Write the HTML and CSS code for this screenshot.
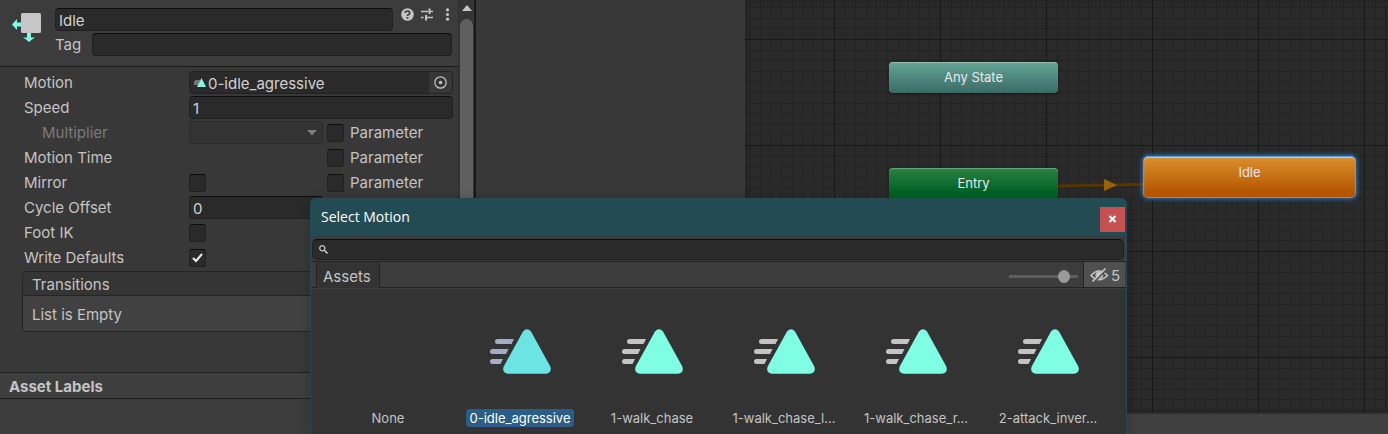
FILE: index.html
```html
<!DOCTYPE html>
<html lang="en">
<head>
<meta charset="utf-8">
<title>Animator - Select Motion</title>
<link rel="stylesheet" href="styles.css">
</head>
<body>
<svg class="defs" width="0" height="0" aria-hidden="true">
  <symbol id="clip" viewBox="0 0 61 45">
    <path class="clip-bars" d="M7.500 10H24L21.500 15H7.500A2.500 2.500 0 0 1 7.500 10ZM2.500 20H18.500L16 25H2.500A2.500 2.500 0 0 1 2.500 20ZM2.500 30H13L10.500 35H2.500A2.500 2.500 0 0 1 2.500 30Z"/>
    <path class="clip-body" d="M33 2.500Q37 -2 41 2.500L60.300 37.500Q62.300 44 56 44.700H18Q11.700 44 13.700 37.500Z"/>
  </symbol>
</svg>
<main class="app">
  <section class="inspector" aria-label="Inspector">
    <div class="panel">
      <header class="state-head">
        <svg class="state-icon" width="30" height="30" viewBox="0 0 30 30" aria-hidden="true">
          <path fill="#7ffbe2" d="M0 11.500L5 6V9.500H10V13.500H5V17ZM15 20H19V24.500H23Q20 26 17 29Q14 26 11 24.500H15Z"/>
          <rect x="9" y="0" width="20" height="20" rx="1.500" fill="#c6c6c6"/>
        </svg>
        <div class="head-fields">
          <div class="name-line">
            <input class="field" type="text" value="Idle" aria-label="State name">
            <div class="head-tools">
              <button class="tool" type="button" aria-label="Help"><svg width="13" height="13" viewBox="0 0 13 13"><circle cx="6.500" cy="6.500" r="6.300" fill="#c4c4c4"/><path d="M4.300 5Q4.300 3 6.500 3Q8.700 3 8.700 4.900Q8.700 6 7.500 6.500Q6.500 7 6.500 8" fill="none" stroke="#3c3c3c" stroke-width="1.700"/><rect x="5.600" y="9" width="1.800" height="1.700" fill="#3c3c3c"/></svg></button>
              <button class="tool" type="button" aria-label="Presets"><svg width="13" height="13" viewBox="0 0 13 13"><path d="M0 3.500H7M9 3.500H12M0 9.500H2.500M4.500 9.500H12" stroke="#c4c4c4" stroke-width="1.500"/><path d="M8.500 .5V6M5 7V12.500" stroke="#c4c4c4" stroke-width="2"/></svg></button>
              <button class="tool" type="button" aria-label="More"><svg width="13" height="13" viewBox="0 0 13 13" fill="#c4c4c4"><circle cx="6.500" cy="1.800" r="1.600"/><circle cx="6.500" cy="6.500" r="1.600"/><circle cx="6.500" cy="11.200" r="1.600"/></svg></button>
            </div>
          </div>
          <div class="tag-line"><label for="tag">Tag</label><input class="field" id="tag" type="text"></div>
        </div>
      </header>
      <div class="rows">
        <div class="row">
          <span class="label">Motion</span>
          <div class="object-field">
            <svg width="12" height="9" viewBox="0 0 12 9" aria-hidden="true"><path d="M1.500 2H6V7H0V3.500Z" fill="#747474"/><path d="M7.500 0L12 9H3Z" fill="#7ffbe2"/></svg>
            <span class="object-name">0-idle_agressive</span>
            <button class="picker" type="button" aria-label="Pick motion"><svg width="13" height="13" viewBox="0 0 13 13"><circle cx="6.500" cy="6.500" r="5.700" fill="none" stroke="#c4c4c4" stroke-width="1.200"/><circle cx="6.500" cy="6.500" r="1.700" fill="#c4c4c4"/></svg></button>
          </div>
        </div>
        <div class="row"><label class="label" for="speed">Speed</label><input class="field" id="speed" type="text" value="1"></div>
        <div class="row">
          <label class="label sub" for="mult">Multiplier</label>
          <div class="split">
            <div class="drop"><select id="mult" disabled><option></option></select><svg width="10" height="6" viewBox="0 0 10 6" aria-hidden="true"><path d="M0 0H10L5 5.500Z" fill="#7d7d7d"/></svg></div>
            <label class="param"><input class="check" type="checkbox">Parameter</label>
          </div>
        </div>
        <div class="row">
          <span class="label">Motion Time</span>
          <div class="split"><span></span><label class="param"><input class="check" type="checkbox">Parameter</label></div>
        </div>
        <div class="row">
          <label class="label" for="mirror">Mirror</label>
          <div class="split"><input class="check" id="mirror" type="checkbox"><label class="param"><input class="check" type="checkbox">Parameter</label></div>
        </div>
        <div class="row">
          <label class="label" for="offset">Cycle Offset</label>
          <div class="split"><input class="field" id="offset" type="text" value="0"></div>
        </div>
        <div class="row"><label class="label" for="ik">Foot IK</label><input class="check" id="ik" type="checkbox"></div>
        <div class="row"><label class="label" for="wd">Write Defaults</label><input class="check" id="wd" type="checkbox" checked></div>
      </div>
      <section class="list">
        <h2 class="list-head">Transitions</h2>
        <p class="list-body">List is Empty</p>
      </section>
      <h2 class="labels-head">Asset Labels</h2>
      <div class="labels-body"></div>
    </div>
    <div class="scrollbar" aria-hidden="true">
      <svg width="10" height="6" viewBox="0 0 10 6"><path d="M0 6L5 0L10 6Z" fill="#c4c4c4"/></svg>
      <div class="thumb"></div>
    </div>
  </section>

  <div class="gutter"></div>

  <section class="graph" aria-label="State machine">
    <div class="canvas">
      <svg class="grid" width="100%" height="100%" aria-hidden="true">
        <defs>
          <pattern id="cells" x="89" y="39" width="106" height="106" patternUnits="userSpaceOnUse">
            <path fill="none" stroke="#232323" d="M11.500 0V106M21.500 0V106M32.500 0V106M42.500 0V106M53.500 0V106M64.500 0V106M74.500 0V106M85.500 0V106M95.500 0V106M0 11.500H106M0 21.500H106M0 32.500H106M0 42.500H106M0 53.500H106M0 64.500H106M0 74.500H106M0 85.500H106M0 95.500H106"/>
            <path fill="none" stroke="#191919" d="M.5 0V106M0 .5H106"/>
          </pattern>
        </defs>
        <rect width="100%" height="100%" fill="url(#cells)"/>
        <path d="M313 186L399 184.500" stroke="#563600" stroke-width="3"/>
        <path d="M359 179L372 185L359 191Z" fill="#9c6300"/>
      </svg>
      <div class="node any">Any State</div>
      <div class="node entry">Entry</div>
      <div class="node idle">Idle</div>
    </div>
    <div class="graph-foot"></div>
  </section>

  <section class="dialog" role="dialog" aria-labelledby="dlg-title">
    <header class="dialog-head">
      <h1 id="dlg-title">Select Motion</h1>
      <button class="close" type="button" aria-label="Close"><svg width="9" height="8" viewBox="0 0 9 8"><path d="M1.500 1L7.500 7M7.500 1L1.500 7" stroke="#fff" stroke-width="2"/></svg></button>
    </header>
    <div class="search">
      <svg width="9" height="9" viewBox="0 0 9 9" aria-hidden="true"><circle cx="3.300" cy="3.300" r="2.600" fill="none" stroke="#c4c4c4" stroke-width="1.300"/><path d="M5.200 5.200L8.500 8.500" stroke="#c4c4c4" stroke-width="1.600"/></svg>
      <input type="text" aria-label="Search">
    </div>
    <div class="toolbar">
      <button class="tab" type="button">Assets</button>
      <input class="size" type="range" min="0" max="100" value="87" aria-label="Icon size">
      <button class="hidden-count" type="button"><svg width="19" height="15" viewBox="0 0 19 15" aria-hidden="true"><path d="M1 7.500Q9 -1.500 17.500 7.500Q9 16 1 7.500Z" fill="none" stroke="#c4c4c4" stroke-width="1.600"/><circle cx="9.300" cy="7.200" r="3.800" fill="#c4c4c4"/><path d="M3.500 14.500L16.500 1.500" stroke="#505050" stroke-width="2"/><path d="M2.500 13.500L15.500 .5" stroke="#c4c4c4" stroke-width="1.700"/></svg>5</button>
    </div>
    <div class="assets">
      <button class="asset" type="button"><span class="thumbnail"></span><span class="caption">None</span></button>
      <button class="asset selected" type="button"><svg class="thumbnail"><use href="#clip"/></svg><span class="caption">0-idle_agressive</span></button>
      <button class="asset" type="button"><svg class="thumbnail"><use href="#clip"/></svg><span class="caption">1-walk_chase</span></button>
      <button class="asset" type="button"><svg class="thumbnail"><use href="#clip"/></svg><span class="caption">1-walk_chase_l...</span></button>
      <button class="asset" type="button"><svg class="thumbnail"><use href="#clip"/></svg><span class="caption">1-walk_chase_r...</span></button>
      <button class="asset" type="button"><svg class="thumbnail"><use href="#clip"/></svg><span class="caption">2-attack_inver...</span></button>
    </div>
  </section>
</main>
</body>
</html>
```

FILE: styles.css
```css
* { box-sizing: border-box; }

body {
  margin: 0;
  background: #383838;
  color: #c4c4c4;
  font: 15px/23px Inter, sans-serif;
}

button, input, select { font: inherit; color: inherit; margin: 0; }
button { padding: 0; border: 0; background: none; }
h1, h2, p { margin: 0; font-size: inherit; font-weight: 400; }
.defs { position: absolute; }

.app {
  position: relative;
  display: grid;
  grid-template-columns: 476px 269px 1fr;
  height: 100vh;
  overflow: hidden;
}

/* Inspector */
.inspector { display: flex; border-right: 2px solid #191919; }
.panel { flex: 1; display: flex; flex-direction: column; }

.state-head {
  display: flex;
  gap: 13px;
  padding: 8px 6px 10px 12px;
  background: #3c3c3c;
  border-bottom: 1px solid #1a1a1a;
}
.state-icon { margin-top: 5px; }
.head-fields { flex: 1; display: flex; flex-direction: column; gap: 2px; }
.name-line, .tag-line { display: flex; }
.name-line { gap: 8px; margin-right: -2px; }
.tag-line { gap: 11px; }
.head-tools { display: flex; gap: 7px; align-items: flex-start; }
.tool { display: flex; width: 13px; height: 13px; }

.field {
  flex: 1;
  min-width: 0;
  width: 100%;
  height: 23px;
  padding: 2px 3px 0;
  color: #d2d2d2;
  background: #2a2a2a;
  border: 1px solid #212121;
  border-top-color: #0d0d0d;
  border-radius: 4px;
}

.rows { display: flex; flex-direction: column; gap: 2px; padding: 4px 5px 0 24px; }
.row { display: grid; grid-template-columns: 165px 1fr; align-items: center; height: 23px; }
.sub { padding-left: 18px; color: #7b7b7b; }
.split { display: grid; grid-template-columns: 134px 1fr; gap: 4px; align-items: center; }
.param { display: flex; align-items: center; gap: 6px; }

.check {
  appearance: none;
  width: 17px;
  height: 18px;
  background: #2a2a2a;
  border: 1px solid #212121;
  border-top-color: #0d0d0d;
  border-radius: 3px;
}
.check:checked {
  background: #2a2a2a url("data:image/svg+xml,%3Csvg xmlns='http://www.w3.org/2000/svg' viewBox='0 0 15 15'%3E%3Cpath d='M3 8L6 11L12 4' fill='none' stroke='%23eee' stroke-width='2'/%3E%3C/svg%3E") center / 15px no-repeat;
}

.object-field {
  display: flex;
  align-items: center;
  gap: 2px;
  height: 23px;
  padding-left: 4px;
  color: #d2d2d2;
  background: #2a2a2a;
  border: 1px solid #212121;
  border-radius: 4px;
  overflow: hidden;
}
.object-name { flex: 1; padding-top: 2px; }
.picker { display: flex; align-items: center; justify-content: center; width: 23px; height: 21px; background: #373737; }

.drop { display: flex; align-items: center; justify-content: flex-end; height: 23px; background: #333; border: 1px solid #2b2b2b; border-radius: 4px; padding-right: 5px; }
.drop select { flex: 1; min-width: 0; height: 20px; appearance: none; border: 0; background: none; }

.list { margin: 2px 6px 40px 22px; border: 1px solid #242424; border-radius: 4px; background: #414141; }
.list-head { height: 24px; padding: 2px 9px; line-height: 22px; background: #353535; border-bottom: 1px solid #242424; border-radius: 3px 3px 0 0; }
.list-body { padding: 7px 9px 5px; }
.labels-head { padding: 2px 9px 0; background: #3e3e3e; border: solid #1f1f1f; border-width: 1px 0; font-weight: 700; }
.labels-body { flex: 1; background: #3c3c3c; }

.scrollbar { display: flex; flex-direction: column; align-items: center; gap: 8px; width: 16px; padding-top: 5px; background: #353535; border-left: 1px solid #303030; }
.scrollbar svg { flex: none; }
.thumb { flex: 1; width: 13px; background: #5f5f5f; border-radius: 7px 7px 0 0; }

/* State machine graph */
.graph { display: flex; flex-direction: column; }
.canvas { position: relative; flex: 1; background: #2a2a2a; overflow: hidden; box-shadow: inset 2px 0 4px #222; }
.grid { display: block; position: absolute; }
.graph-foot { height: 21px; background: #404040; border-top: 1px solid #333; }

.node {
  position: absolute;
  width: 169px;
  height: 31px;
  border-radius: 4px;
  color: #e8e8e8;
  font-size: 13px;
  line-height: 30px;
  text-align: center;
  box-shadow: inset 0 1px 1px #ffffff50, 0 1px 2px #0008;
}
.any { left: 144px; top: 62px; background: linear-gradient(#63a596, #3a6b66); }
.entry { left: 144px; top: 168px; background: linear-gradient(#2a8142, #016025 80%); }
.idle {
  left: 399px;
  top: 157px;
  width: 211px;
  height: 40px;
  background: linear-gradient(#d98f2c, #b45500 90%);
  box-shadow: inset 0 1px 1px #ffffff80, 0 0 0 1px #5b9bdc, 0 0 4px 2px #2878c8;
}

/* Motion picker */
.dialog {
  position: absolute;
  left: 310px;
  top: 198px;
  bottom: 0;
  width: 817px;
  display: flex;
  flex-direction: column;
  background: #3c3c3c;
  border: solid #234b53;
  border-width: 0 1px;
  border-radius: 6px 6px 0 0;
  overflow: hidden;
  box-shadow: 0 2px 12px #0003;
}
.dialog-head { display: flex; align-items: center; justify-content: space-between; height: 38px; padding: 0 1px 0 10px; background: #234b53; color: #fff; }
.dialog-head h1 { font: 14px/38px "Open Sans", sans-serif; }
.close { display: flex; align-items: center; justify-content: center; width: 25px; height: 25px; margin-top: 4px; background: #c75050; }

.search { display: flex; align-items: center; gap: 6px; height: 21px; margin: 3px 2px 1px 1px; padding: 0 6px; background: #2a2a2a; border: 1px solid #212121; border-top-color: #0d0d0d; border-radius: 5px; }
.search input { flex: 1; height: 17px; border: 0; background: none; }

.toolbar { display: flex; align-items: stretch; height: 27px; padding-left: 5px; border: solid #232323; border-width: 1px 0; }
.tab { height: 26px; padding: 3px 8px 0 6px; background: #333; border: solid #232323; border-width: 0 1px; border-radius: 4px 4px 0 0; }
.size { appearance: none; width: 69px; height: 13px; margin: 8px 5px 0 auto; background: linear-gradient(#5e5e5e, #5e5e5e) center / 100% 3px no-repeat; }
.size::-webkit-slider-thumb { appearance: none; width: 12px; height: 13px; border-radius: 50%; background: #999; }
.hidden-count { display: flex; align-items: center; gap: 2px; padding: 1px 5px 0 6px; margin-right: 1px; background: #505050; border-left: 1px solid #232323; }

.assets { flex: 1; display: grid; grid-template-columns: repeat(auto-fill, 132px); padding: 40px 0 0 11px; background: #333; border-top: 1px solid #3c3c3c; }
.asset { display: flex; flex-direction: column; align-items: center; gap: 35px; }
.thumbnail { width: 61px; height: 45px; }
.caption { padding: 0 4px; border-radius: 3px; font-size: 13px; line-height: 18px; }
.clip-bars { fill: var(--bars, #c4c4c4); }
.clip-body { fill: var(--body, #7ffee4); }
.selected { --bars: #a3adc4; --body: #6ce4e4; color: #fff; }
.selected .caption { background: #2c5d87; }
```
